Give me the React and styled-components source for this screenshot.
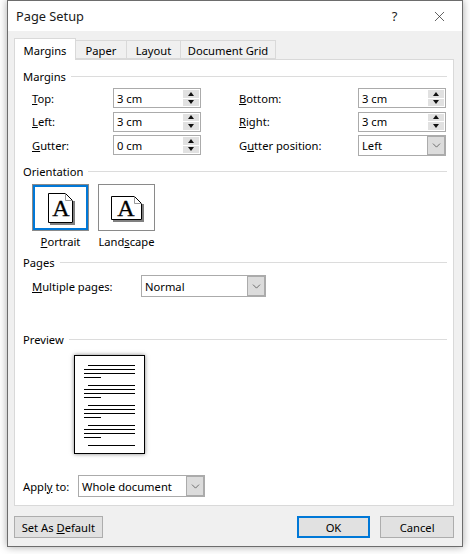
import React from 'react'
import styled, { createGlobalStyle } from 'styled-components'
import { ChevronDown, X } from 'lucide-react'

const Global = createGlobalStyle`
  html, body { margin: 0; padding: 0; background: #fff; }
  body { font-family: "Noto Sans", "Open Sans", sans-serif; font-size: 11.2px; color: #000; }
  * { box-sizing: border-box; }
  u { text-underline-offset: 1px; }
`

const Page = styled.div`
  width: 470px;
  height: 554px;
  padding: 0 7px 7px;
  overflow: hidden;
`

const Dialog = styled.div`
  width: 456px;
  height: 547px;
  background: #f0f0f0;
  border: 1px solid #6d6d6d;
  box-shadow: 0 0 8px rgba(0, 0, 0, 0.35);
  display: flex;
  flex-direction: column;
`

const TitleBar = styled.div`
  height: 30px;
  flex: none;
  background: #fff;
  display: flex;
  align-items: center;
  padding-left: 8px;
`

const Title = styled.div`
  flex: 1;
  font-size: 12.8px;
  color: #1a1a1a;
`

const TitleButton = styled.div`
  width: 45px;
  height: 30px;
  display: flex;
  align-items: center;
  justify-content: center;
  font-size: 13px;
  color: #222;
`

const Body = styled.div`
  flex: 1;
  padding: 7px 8px 7px 6px;
  display: flex;
  flex-direction: column;
`

const Tabs = styled.div`
  height: 21px;
  display: flex;
  align-items: flex-end;
  position: relative;
  z-index: 1;
`

const Tab = styled.div`
  width: ${p => p.$width}px;
  height: ${p => (p.$active ? 22 : 19)}px;
  margin-bottom: ${p => (p.$active ? -1 : 0)}px;
  background: ${p => (p.$active ? '#fff' : '#f0f0f0')};
  border: 1px solid #d9d9d9;
  border-left-width: ${p => (p.$first ? 1 : 0)}px;
  border-bottom-width: ${p => (p.$active ? 0 : 1)}px;
  display: flex;
  align-items: center;
  justify-content: center;
  padding-top: 1px;
`

const Panel = styled.div`
  height: 447px;
  width: 440px;
  background: #fff;
  border: 1px solid #d9d9d9;
  padding: 8px 6px 0 8px;
`

const GroupHead = styled.div`
  height: 16px;
  margin-top: ${p => p.$top || 0}px;
  display: flex;
  align-items: center;
  gap: 5px;

  &::after {
    content: '';
    flex: 1;
    height: 1px;
    background: #dcdcdc;
  }
`

const FieldGrid = styled.div`
  margin: 4px 0 0 9px;
  display: grid;
  grid-template-columns: 81px 88px 38px 119px 88px;
  grid-template-rows: 20px 20px 20px;
  row-gap: 3.5px;
  align-items: center;
`

const Label = styled.label`
  grid-column: ${p => p.$col || 'auto'};
  width: ${p => (p.$width ? `${p.$width}px` : 'auto')};
  flex: none;
`

const BoxFrame = styled.div`
  height: ${p => p.$height || 20}px;
  width: ${p => (p.$width ? `${p.$width}px` : 'auto')};
  background: #fff;
  border: 1px solid #ababab;
  display: flex;
  align-items: center;
  justify-content: space-between;
  padding-left: 3px;
`

const SpinColumn = styled.div`
  width: 16px;
  height: 16px;
  margin-right: 1px;
  display: flex;
  flex-direction: column;
  gap: 1px;
`

const SpinPart = styled.div`
  flex: 1;
  background: #e1e1e1;
  display: flex;
  align-items: center;
  justify-content: center;

  &::after {
    content: '';
    border-left: 3.5px solid transparent;
    border-right: 3.5px solid transparent;
    border-${p => (p.$up ? 'bottom' : 'top')}: 4px solid #111;
  }
`

const SelectArrow = styled.div`
  width: 18px;
  align-self: stretch;
  background: #dcdcdc;
  border: 1px solid #ababab;
  display: flex;
  align-items: center;
  justify-content: center;
  color: #333;
`

const OrientationRow = styled.div`
  margin: 5px 0 0 9px;
  display: flex;
  gap: 9px;
`

const OrientationItem = styled.div`
  width: 57px;
  display: flex;
  flex-direction: column;
  align-items: center;
  gap: 3px;
  white-space: nowrap;
`

const OrientationButton = styled.div`
  width: 57px;
  height: 47px;
  padding: 2px 0 0 2px;
  border: 1px solid #8a8a8a;
  outline: ${p => (p.$active ? '2px solid #0078d7' : 'none')};
  outline-offset: -3px;
  background: #fff;
  display: flex;
  align-items: center;
  justify-content: center;
`

const PagesRow = styled.div`
  margin: 5px 0 0 9px;
  display: flex;
  align-items: center;
`

const PreviewBox = styled.div`
  margin: 8px 0 0 51px;
  width: 71px;
  height: 99px;
  background: #fff;
  border: 1px solid #000;
  box-shadow: 0 0 4px rgba(0, 0, 0, 0.5);
`

const ApplyRow = styled.div`
  margin-top: 21px;
  display: flex;
  align-items: center;
`

const Footer = styled.div`
  margin-top: 10px;
  display: flex;
  align-items: center;
`

const Button = styled.div`
  width: ${p => p.$width}px;
  height: 22px;
  margin-left: ${p => p.$left || 0}px;
  background: #e1e1e1;
  border: ${p => (p.$primary ? '2px solid #0078d7' : '1px solid #adadad')};
  display: flex;
  align-items: center;
  justify-content: center;
`

function Spinner({ value }) {
  return (
    <BoxFrame>
      {value}
      <SpinColumn>
        <SpinPart $up />
        <SpinPart />
      </SpinColumn>
    </BoxFrame>
  )
}

function Select({ value, width, height }) {
  return (
    <BoxFrame $width={width} $height={height}>
      {value}
      <SelectArrow><ChevronDown size={13} strokeWidth={1.2} /></SelectArrow>
    </BoxFrame>
  )
}

function SheetIcon({ landscape }) {
  const w = landscape ? 31 : 25
  const h = landscape ? 24 : 30
  return (
    <svg width={w + 2} height={h + 2} viewBox={`0 0 ${w + 2} ${h + 2}`}>
      <path d={`M2 ${h + 2}H${w + 2}V8H${w}V${h}H2Z`} fill="#808080" />
      <path d={`M.5 .5H${w - 7.5}L${w - .5} 7.5V${h - .5}H.5Z`} fill="#fff" stroke="#000" />
      <path d={`M${w - 7.5} .5V7.5H${w - .5}`} fill="none" stroke="#999" />
      <text
        x={landscape ? 15 : 13}
        y={landscape ? 20 : 23}
        textAnchor="middle"
        fontFamily="Liberation Serif, serif"
        fontSize="24"
        stroke="#000"
        strokeWidth=".3"
      >A</text>
    </svg>
  )
}

const previewLines = [
  [14, 9, 60], [10, 13, 60], [10, 17, 60], [10, 21, 26],
  [14, 29, 60], [10, 33, 60], [10, 37, 60], [10, 41, 26],
  [14, 49, 60], [10, 53, 60], [10, 57, 60], [10, 61, 26],
  [14, 69, 60], [10, 73, 60], [10, 77, 60], [10, 81, 26],
  [14, 89, 60],
]

function PreviewSheet() {
  return (
    <svg width="69" height="97" viewBox="0 0 69 97">
      {previewLines.map(([x, y, end], i) => (
        <rect key={i} x={x - 1} y={y} width={end - x + 1} height="1" fill="#000" />
      ))}
    </svg>
  )
}

export default function App() {
  return (
    <>
      <Global />
      <Page>
        <Dialog>
          <TitleBar>
            <Title>Page Setup</Title>
            <TitleButton>?</TitleButton>
            <TitleButton><X size={17} strokeWidth={1} /></TitleButton>
          </TitleBar>
          <Body>
            <Tabs>
              <Tab $active $first $width={62}>Margins</Tab>
              <Tab $width={51}>Paper</Tab>
              <Tab $width={54}>Layout</Tab>
              <Tab $width={95}>Document Grid</Tab>
            </Tabs>
            <Panel>
              <GroupHead>Margins</GroupHead>
              <FieldGrid>
                <Label><u>T</u>op:</Label>
                <Spinner value="3 cm" />
                <Label $col="4"><u>B</u>ottom:</Label>
                <Spinner value="3 cm" />
                <Label><u>L</u>eft:</Label>
                <Spinner value="3 cm" />
                <Label $col="4"><u>R</u>ight:</Label>
                <Spinner value="3 cm" />
                <Label><u>G</u>utter:</Label>
                <Spinner value="0 cm" />
                <Label $col="4">G<u>u</u>tter position:</Label>
                <Select value="Left" height={21} />
              </FieldGrid>
              <GroupHead $top={8}>Orientation</GroupHead>
              <OrientationRow>
                <OrientationItem>
                  <OrientationButton $active><SheetIcon /></OrientationButton>
                  <span><u>P</u>ortrait</span>
                </OrientationItem>
                <OrientationItem>
                  <OrientationButton><SheetIcon landscape /></OrientationButton>
                  <span>Land<u>s</u>cape</span>
                </OrientationItem>
              </OrientationRow>
              <GroupHead $top={5}>Pages</GroupHead>
              <PagesRow>
                <Label $width={109}><u>M</u>ultiple pages:</Label>
                <Select value="Normal" width={125} height={22} />
              </PagesRow>
              <GroupHead $top={34}>Preview</GroupHead>
              <PreviewBox><PreviewSheet /></PreviewBox>
              <ApplyRow>
                <Label $width={55}>Appl<u>y</u> to:</Label>
                <Select value="Whole document" width={127} height={22} />
              </ApplyRow>
            </Panel>
            <Footer>
              <Button $width={89}><span>Set As <u>D</u>efault</span></Button>
              <Button $width={74} $left={194} $primary>OK</Button>
              <Button $width={74} $left={10}>Cancel</Button>
            </Footer>
          </Body>
        </Dialog>
      </Page>
    </>
  )
}
